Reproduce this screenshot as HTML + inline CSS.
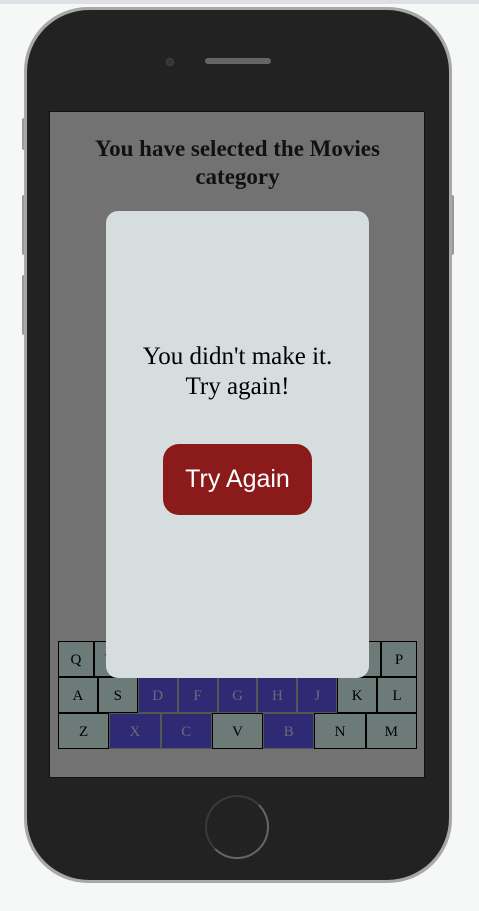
<!DOCTYPE html><html><head><style>
body{margin:0;width:479px;height:911px;background:#f6f8f8;position:relative;overflow:hidden;font-family:"Liberation Serif",serif}
.a{position:absolute}
.key{position:absolute;box-sizing:border-box;border:1px solid #000;background:#6c7b78;font-size:15px;text-align:center;color:#000}
.b{background:#2e2a73;color:#6b6a7a;border-color:#555}
</style></head><body>
<div class="a" style="left:0;top:0;width:479px;height:4px;background:#dde0e4"></div>
<div class="a" style="left:22px;top:118px;width:4px;height:32px;background:#999;border-radius:2px"></div>
<div class="a" style="left:22px;top:195px;width:4px;height:60px;background:#999;border-radius:2px"></div>
<div class="a" style="left:22px;top:275px;width:4px;height:60px;background:#999;border-radius:2px"></div>
<div class="a" style="left:450px;top:195px;width:4px;height:60px;background:#999;border-radius:2px"></div>
<div class="a" style="left:24px;top:7px;width:428px;height:876px;background:#a8a8a8;border-radius:64px"></div>
<div class="a" style="left:27px;top:10px;width:422px;height:870px;background:#222;border-radius:62px"></div>
<div class="a" style="left:166px;top:58px;width:6px;height:6px;border-radius:50%;background:#333;border:1px solid #444"></div>
<div class="a" style="left:205px;top:58px;width:66px;height:6px;border-radius:3px;background:#666"></div>
<div class="a" style="left:205px;top:795px;width:64px;height:64px;border-radius:50%;border:2px solid #3a3a3a;border-right-color:#666;border-bottom-color:#666;box-sizing:border-box"></div>
<div class="a" style="left:49px;top:111px;width:376px;height:667px;background:#727272;border:1px solid #111;box-sizing:border-box"></div>
<div class="a" style="left:50px;top:135px;width:375px;text-align:center;font-weight:bold;font-size:23px;line-height:28px;color:#111">You have selected the Movies<br>category</div>
<div id="kb"></div>
<div class="a" style="left:106px;top:211px;width:263px;height:467px;background:#d5dddf;border-radius:12px"></div>
<div class="a" style="left:106px;top:342px;width:263px;text-align:center;font-size:25px;line-height:30px;color:#000">You didn't make it.<br>Try again!</div>
<div class="a" style="left:163px;top:444px;width:149px;height:71px;background:#8b1a1b;border-radius:16px;color:#fff;font-family:'Liberation Sans',sans-serif;font-size:25px;line-height:71px;text-align:center">Try Again</div>
<script>
var kb=document.getElementById('kb'),h='';
function row(keys,y,blue){var w=359/keys.length;for(var i=0;i<keys.length;i++){var x=58+i*w;h+='<div class="key'+(blue.indexOf(keys[i])>=0?' b':'')+'" style="left:'+x+'px;top:'+y+'px;width:'+w+'px;height:36px;line-height:36px">'+keys[i]+'</div>';}}
row("QWERTYUIOP".split(''),641,[]);row("ASDFGHJKL".split(''),677,"DFGHJ");row("ZXCVBNM".split(''),713,"XCB");
kb.innerHTML=h;
</script>
</body></html>
